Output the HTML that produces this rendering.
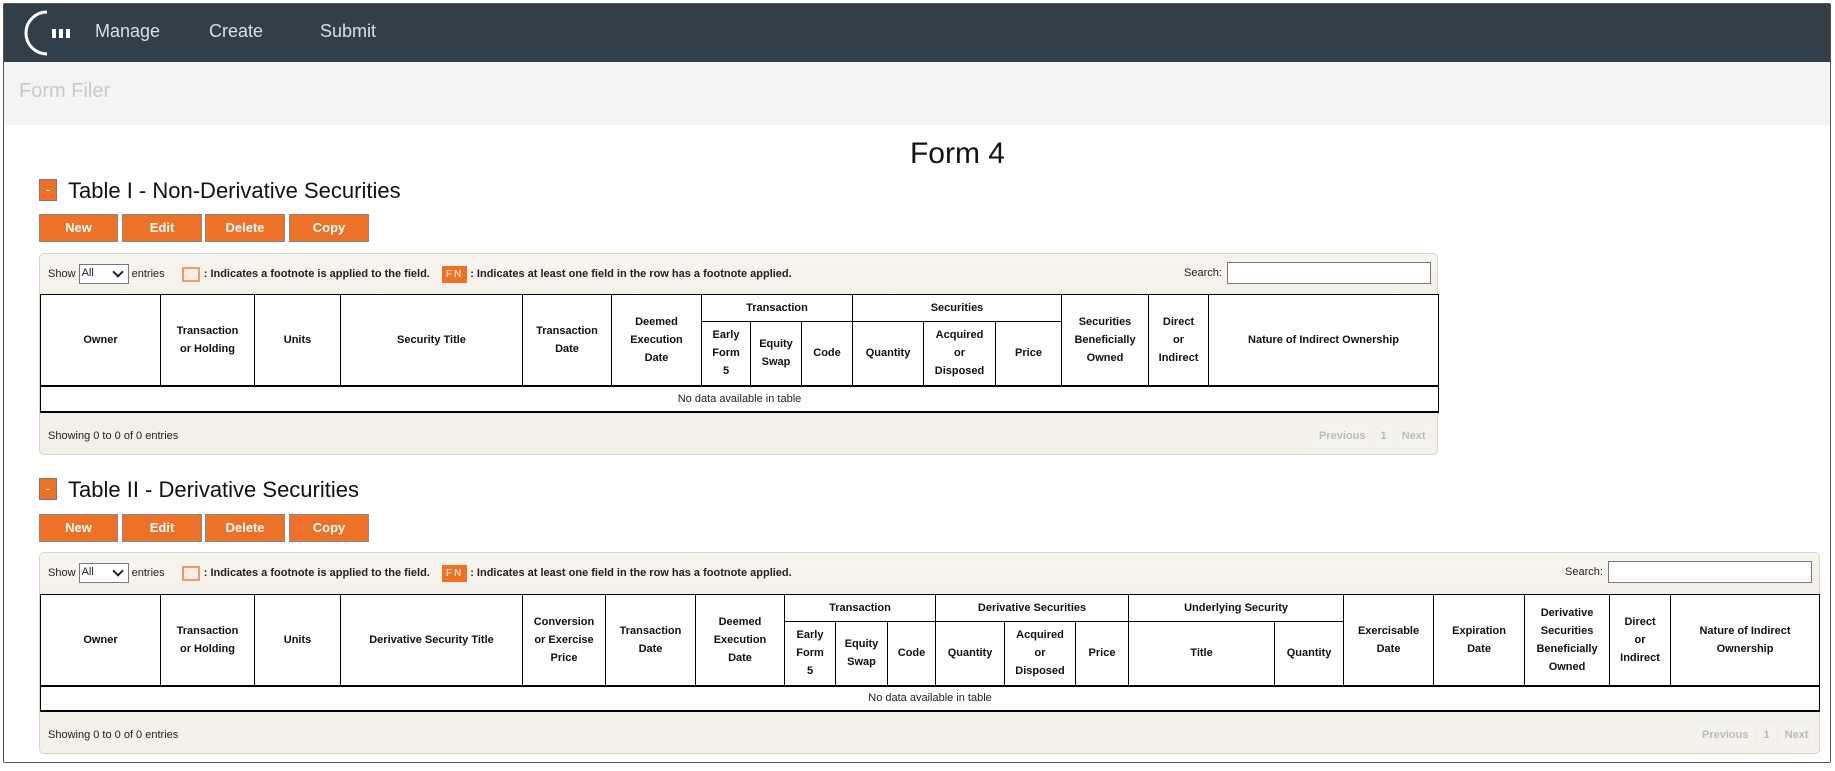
<!DOCTYPE html>
<html><head><meta charset="utf-8"><style>
*{box-sizing:border-box}
body{margin:0;width:1835px;height:771px;overflow:hidden;background:#fff;font-family:"Liberation Sans",Tahoma,sans-serif;position:relative}
.frame{position:absolute;left:3px;top:3px;width:1828px;height:760px;border:1px solid #555;border-radius:2px}
.nav{position:absolute;left:4px;top:4px;width:1826px;height:58px;background:#333f48}
.nav a{position:absolute;top:17px;color:#cfe0ee;font-size:18px}
.band{position:absolute;left:4px;top:62px;width:1826px;height:63px;background:#f4f4f4}
.band span{position:absolute;left:15px;top:18px;font-size:20px;color:#c8c8c8}
h1{position:absolute;left:0;width:1915px;text-align:center;top:137px;margin:0;font-weight:normal;font-size:30px;color:#111}
.sec{position:absolute;left:39px;font-size:22px;color:#111}
.sec i{display:inline-block;width:18px;height:22px;background:#ee7128;border:1px solid #777;color:#fff;font-style:normal;font-size:14px;text-align:center;line-height:18px;vertical-align:top;margin-right:11px;margin-top:1px}
.btn{position:absolute;height:28px;background:#ee7128;border:1px solid #888;color:#fff;font-weight:bold;font-size:13px;text-align:center;line-height:26px}
.panel{position:absolute;left:39px;border:1px solid #d9d4c1;border-radius:5px;background:linear-gradient(#f7f5ef,#efece2 40%,#f3f1ea)}
.ctl{position:absolute;top:10px;left:8px;font-size:11px;color:#222;white-space:nowrap}
.sel{display:inline-block;width:50px;height:20px;border:1px solid #777;background:#fff;vertical-align:middle;font-size:11px;padding:2px;position:relative}
.sel:after{content:"";position:absolute;right:6px;top:3px;width:6px;height:6px;border-right:2px solid #222;border-bottom:2px solid #222;transform:rotate(45deg)}
.fbox{display:inline-block;width:18px;height:15px;border:2px solid #ee9b6a;background:#f4eee6;vertical-align:middle;margin:0 4px 0 14px}
.fn{display:inline-block;background:#ee7128;color:#fff;font-size:10px;padding:3px 4px;letter-spacing:2px;vertical-align:middle;margin:0 3px 0 12px}
.search{position:absolute;top:8px;font-size:11px;color:#222}
.search b{display:inline-block;width:204px;height:22px;border:1px solid #777;background:#fff;vertical-align:middle;margin-left:5px}
table{position:absolute;left:0;border-collapse:collapse;table-layout:fixed;background:#fff}
th{border:1px solid #000;font-size:11px;font-weight:bold;color:#111;line-height:18px;padding:0 1px;text-align:center;white-space:nowrap}
td{border:1px solid #000;border-top:2px solid #000;border-bottom:2px solid #000;font-size:11px;text-align:center;color:#222}
.show{position:absolute;left:8px;font-size:11px;color:#222}
.pg{position:absolute;font-size:11px;color:#bbb;font-weight:bold}
.pg span{display:inline-block;padding:6px 6px;background:#f4f2ec}
</style></head><body>
<div class="frame"></div>
<div class="nav">
<svg style="position:absolute;left:10px;top:2px" width="60" height="54" viewBox="0 0 60 54"><path d="M33 6 A21 21 0 1 0 33 48" fill="none" stroke="#fff" stroke-width="3"/><rect x="38" y="23" width="4" height="9" fill="#fff"/><rect x="45" y="23" width="4" height="9" fill="#fff"/><rect x="52" y="23" width="4" height="9" fill="#fff"/></svg>
<a style="left:91px">Manage</a><a style="left:205px">Create</a><a style="left:316px">Submit</a></div>
<div class="band"><span>Form Filer</span></div>
<h1>Form 4</h1>

<div class="sec" style="top:178px"><i>-</i>Table I - Non-Derivative Securities</div>
<div class="btn" style="left:39px;top:214px;width:79px">New</div>
<div class="btn" style="left:122px;top:214px;width:80px">Edit</div>
<div class="btn" style="left:205px;top:214px;width:80px">Delete</div>
<div class="btn" style="left:289px;top:214px;width:80px">Copy</div>
<div class="panel" style="top:253px;width:1399px;height:202px">
<div class="ctl">Show <span class="sel">All</span> entries <span class="fbox"></span><b>: Indicates a footnote is applied to the field.</b><span class="fn">FN</span><b>: Indicates at least one field in the row has a footnote applied.</b></div>
<div class="search" style="left:1144px">Search:<b></b></div>
<table style="top:40px;width:1398px">
<colgroup><col style="width:120px"><col style="width:94px"><col style="width:86px"><col style="width:182px"><col style="width:89px"><col style="width:90px"><col style="width:49px"><col style="width:51px"><col style="width:51px"><col style="width:71px"><col style="width:72px"><col style="width:66px"><col style="width:87px"><col style="width:60px"><col style="width:230px"></colgroup>
<tr style="height:27px"><th rowspan="2">Owner</th><th rowspan="2">Transaction<br>or Holding</th><th rowspan="2">Units</th><th rowspan="2">Security Title</th><th rowspan="2">Transaction<br>Date</th><th rowspan="2">Deemed<br>Execution<br>Date</th><th colspan="3">Transaction</th><th colspan="3">Securities</th><th rowspan="2">Securities<br>Beneficially<br>Owned</th><th rowspan="2">Direct<br>or<br>Indirect</th><th rowspan="2">Nature of Indirect Ownership</th></tr>
<tr style="height:64px"><th>Early<br>Form<br>5</th><th>Equity<br>Swap</th><th>Code</th><th>Quantity</th><th>Acquired<br>or<br>Disposed</th><th>Price</th></tr>
<tr style="height:26px"><td colspan="15">No data available in table</td></tr>
</table>
<div class="show" style="top:176px">Showing 0 to 0 of 0 entries</div>
<div class="pg" style="left:1273px;top:170px"><span>Previous</span> <span>1</span> <span>Next</span></div>
</div>

<div class="sec" style="top:477px"><i>-</i>Table II - Derivative Securities</div>
<div class="btn" style="left:39px;top:514px;width:79px">New</div>
<div class="btn" style="left:122px;top:514px;width:80px">Edit</div>
<div class="btn" style="left:205px;top:514px;width:80px">Delete</div>
<div class="btn" style="left:289px;top:514px;width:80px">Copy</div>
<div class="panel" style="top:552px;width:1781px;height:202px">
<div class="ctl">Show <span class="sel">All</span> entries <span class="fbox"></span><b>: Indicates a footnote is applied to the field.</b><span class="fn">FN</span><b>: Indicates at least one field in the row has a footnote applied.</b></div>
<div class="search" style="left:1525px">Search:<b></b></div>
<table style="top:41px;width:1779px">
<colgroup><col style="width:120px"><col style="width:94px"><col style="width:86px"><col style="width:182px"><col style="width:83px"><col style="width:90px"><col style="width:89px"><col style="width:51px"><col style="width:52px"><col style="width:48px"><col style="width:69px"><col style="width:71px"><col style="width:53px"><col style="width:146px"><col style="width:69px"><col style="width:90px"><col style="width:91px"><col style="width:85px"><col style="width:61px"><col style="width:149px"></colgroup>
<tr style="height:27px"><th rowspan="2">Owner</th><th rowspan="2">Transaction<br>or Holding</th><th rowspan="2">Units</th><th rowspan="2">Derivative Security Title</th><th rowspan="2">Conversion<br>or Exercise<br>Price</th><th rowspan="2">Transaction<br>Date</th><th rowspan="2">Deemed<br>Execution<br>Date</th><th colspan="3">Transaction</th><th colspan="3">Derivative Securities</th><th colspan="2">Underlying Security</th><th rowspan="2">Exercisable<br>Date</th><th rowspan="2">Expiration<br>Date</th><th rowspan="2">Derivative<br>Securities<br>Beneficially<br>Owned</th><th rowspan="2">Direct<br>or<br>Indirect</th><th rowspan="2">Nature of Indirect<br>Ownership</th></tr>
<tr style="height:64px"><th>Early<br>Form<br>5</th><th>Equity<br>Swap</th><th>Code</th><th>Quantity</th><th>Acquired<br>or<br>Disposed</th><th>Price</th><th>Title</th><th>Quantity</th></tr>
<tr style="height:25px"><td colspan="20">No data available in table</td></tr>
</table>
<div class="show" style="top:176px">Showing 0 to 0 of 0 entries</div>
<div class="pg" style="left:1656px;top:170px"><span>Previous</span> <span>1</span> <span>Next</span></div>
</div>
</body></html>
